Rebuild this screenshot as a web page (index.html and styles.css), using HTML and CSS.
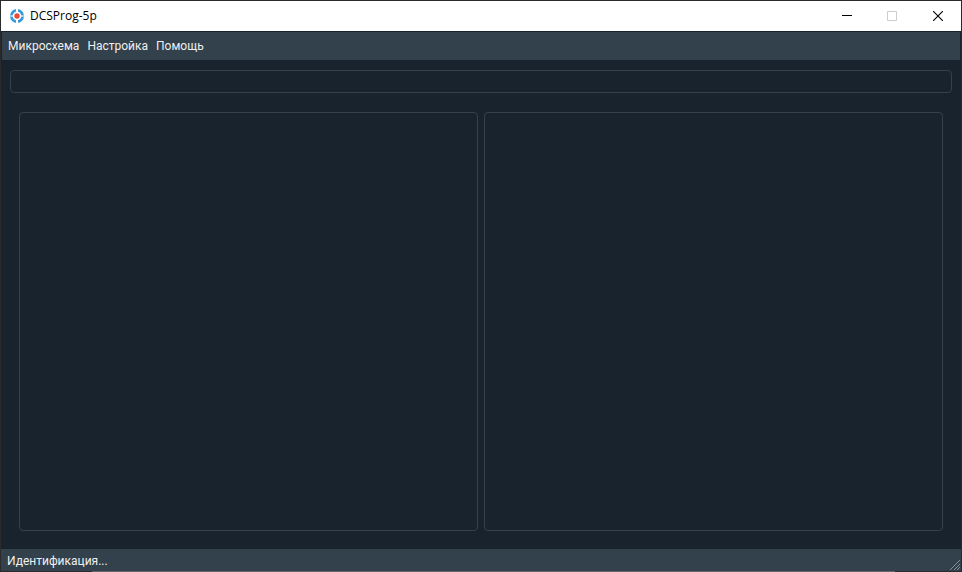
FILE: index.html
```html
<!DOCTYPE html>
<html lang="ru">
<head>
    <meta charset="UTF-8">
    <meta name="viewport" content="width=device-width, initial-scale=1.0">
    <title>DCSProg-5p</title>
    <link rel="stylesheet" href="styles.css">
</head>
<body>
    <div class="window">
        <header class="title-bar">
            <svg class="logo" width="14" height="14" viewBox="0 0 14 14">
                <circle cx="7" cy="7" r="5.7" fill="none" stroke="#3498db" stroke-width="2.6"/>
                <path d="M7 0v4M7 10v4" stroke="#fff" stroke-width="2"/>
                <path d="M0 7h3M11 7h3" stroke="#fff" stroke-width="1"/>
                <circle cx="7" cy="7" r="2.7" fill="#e74c3c"/>
            </svg>
            <h1>DCSProg-5p</h1>
            <div class="window-buttons">
                <button type="button" aria-label="Свернуть">
                    <svg width="12" height="10" viewBox="0 0 12 10"><path d="M2 4.5h10" stroke="#000"/></svg>
                </button>
                <button type="button" aria-label="Развернуть" disabled>
                    <svg width="10" height="10" viewBox="0 0 10 10"><path d="M.5 .5h9v9h-9z" fill="none" stroke="#ccc"/></svg>
                </button>
                <button type="button" aria-label="Закрыть">
                    <svg width="10" height="10" viewBox="0 0 10 10"><path d="M0 0l10 10M10 0L0 10" stroke="#000" stroke-width="1.1"/></svg>
                </button>
            </div>
        </header>
        <nav class="menu-bar">
            <button type="button">Микросхема</button>
            <button type="button">Настройка</button>
            <button type="button">Помощь</button>
        </nav>
        <main>
            <input class="device" type="text" aria-label="Микросхема" readonly>
            <div class="panels">
                <section class="panel"></section>
                <section class="panel"></section>
            </div>
        </main>
        <footer class="status-bar">
            <span>Идентификация...</span>
            <svg class="grip" width="12" height="12" viewBox="0 0 12 12">
                <path d="M1 11L11 1M5 11l6-6M8 11l3-3" stroke="#87919a" stroke-width="1"/>
            </svg>
        </footer>
    </div>
</body>
</html>
```

FILE: styles.css
```css
* {
    box-sizing: border-box;
}

body {
    margin: 0;
    font-family: Roboto, "Open Sans", sans-serif;
    font-size: 12px;
    line-height: 16px;
    color: #f0f0f0;
    background: #19232d;
}

button {
    padding: 0;
    border: none;
    background: none;
    font: inherit;
    color: inherit;
}

.window {
    display: flex;
    flex-direction: column;
    min-height: 100vh;
    border: 1px solid #2b2b2b;
    border-bottom-color: transparent;
    background:
        linear-gradient(to right, #2b2b2b 92px, #636363 92px, #636363 93%, #2b2b2b 93%) bottom / 100% 1px no-repeat border-box,
        #19232d;
}

.title-bar {
    display: flex;
    align-items: center;
    height: 30px;
    padding-left: 9px;
    background: #fff;
    color: #000;
}

.title-bar h1 {
    margin: 0 0 0 6px;
    font-family: "Open Sans", sans-serif;
    font-size: 12px;
    font-weight: normal;
}

.window-buttons {
    display: flex;
    height: 100%;
    margin-left: auto;
}

.window-buttons button {
    display: flex;
    align-items: center;
    justify-content: center;
    width: 46px;
}

.menu-bar {
    display: flex;
    gap: 8px;
    height: 28px;
    margin: 1px 1px 0;
    padding: 0 6px;
    background: #32414b;
}

.menu-bar button {
    color: #f0f0f0;
}

main {
    display: flex;
    flex: 1;
    flex-direction: column;
    gap: 19px;
    padding: 10px 9px 18px;
}

.device {
    width: 100%;
    height: 23px;
    padding: 0 4px;
    border: 1px solid #32414b;
    border-radius: 4px;
    outline: none;
    background: #19232d;
    font: inherit;
    color: #f0f0f0;
}

.panels {
    display: grid;
    flex: 1;
    grid-template-columns: 1fr 1fr;
    gap: 6px;
    margin: 0 9px;
}

.panel {
    border: 1px solid #32414b;
    border-radius: 4px;
}

.status-bar {
    display: flex;
    align-items: center;
    justify-content: space-between;
    height: 22px;
    padding: 1px 0 0 6px;
    background: #32414b;
}

.grip {
    align-self: flex-end;
}
```
